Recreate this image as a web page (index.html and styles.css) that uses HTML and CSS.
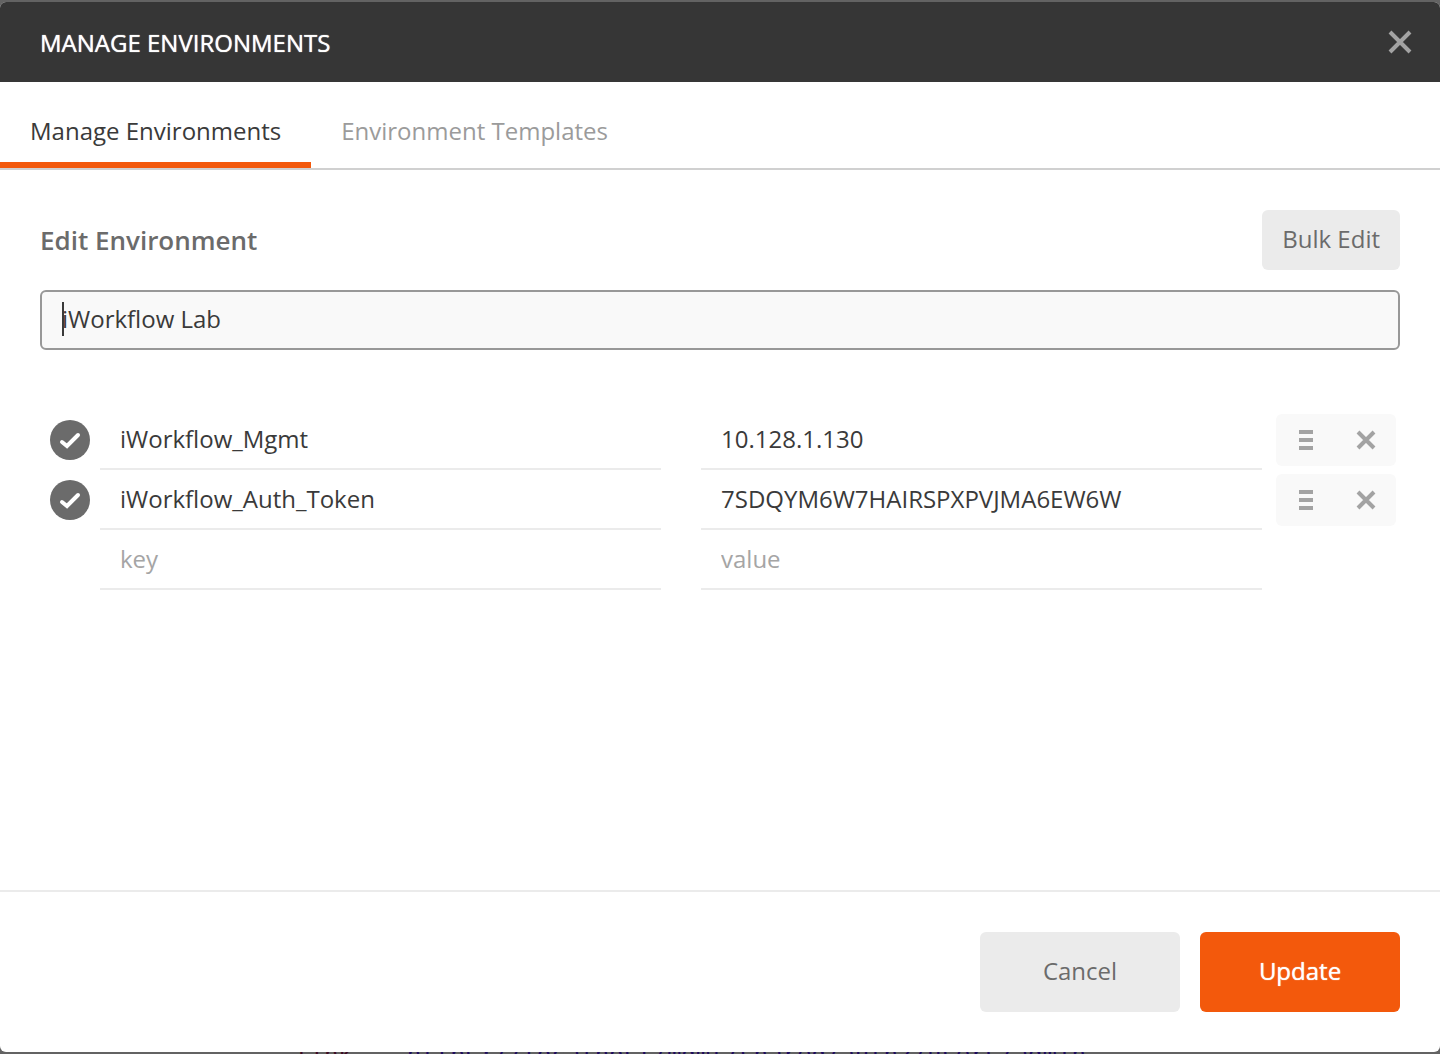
FILE: index.html
```html
<!DOCTYPE html>
<html lang="en">
<head>
<meta charset="utf-8">
<meta name="viewport" content="width=device-width, initial-scale=1">
<title>Manage Environments</title>
<link rel="stylesheet" href="styles.css">
</head>
<body>
<div class="page">
  <section class="modal" role="dialog" aria-labelledby="modal-title">
    <header class="modal-header">
      <h1 class="modal-title" id="modal-title">MANAGE ENVIRONMENTS</h1>
      <button class="icon-button close" type="button" aria-label="Close">
        <svg width="24" height="24" viewBox="0 0 24 24"><path d="M2 2 22 22M22 2 2 22" stroke="currentColor" stroke-width="4" fill="none"/></svg>
      </button>
    </header>
    <nav class="tabs">
      <a class="tab tab-active" href="#manage">Manage Environments</a>
      <a class="tab" href="#templates">Environment Templates</a>
    </nav>
    <form class="editor" id="editor">
      <div class="editor-head">
        <h2 class="editor-title"><label for="env-name">Edit Environment</label></h2>
        <button class="button bulk" type="button">Bulk Edit</button>
      </div>
      <div class="name-field">
        <input class="name-input" id="env-name" type="text" value="iWorkflow Lab">
        <span class="caret"></span>
      </div>
      <div class="rows">
        <div class="row">
          <input class="check" type="checkbox" checked aria-label="Enable iWorkflow_Mgmt">
          <input class="cell" type="text" aria-label="Key 1" placeholder="key" value="iWorkflow_Mgmt">
          <input class="cell" type="text" aria-label="Value 1" placeholder="value" value="10.128.1.130">
          <div class="actions">
            <button class="icon-button" type="button" aria-label="Reorder">
              <svg width="14" height="20" viewBox="0 0 14 20"><path d="M0 2H14M0 10H14M0 18H14" stroke="currentColor" stroke-width="4"/></svg>
            </button>
            <button class="icon-button" type="button" aria-label="Delete">
              <svg width="20" height="20" viewBox="0 0 20 20"><path d="M2 2 18 18M18 2 2 18" stroke="currentColor" stroke-width="4"/></svg>
            </button>
          </div>
        </div>
        <div class="row">
          <input class="check" type="checkbox" checked aria-label="Enable iWorkflow_Auth_Token">
          <input class="cell" type="text" aria-label="Key 2" placeholder="key" value="iWorkflow_Auth_Token">
          <input class="cell" type="text" aria-label="Value 2" placeholder="value" value="7SDQYM6W7HAIRSPXPVJMA6EW6W">
          <div class="actions">
            <button class="icon-button" type="button" aria-label="Reorder">
              <svg width="14" height="20" viewBox="0 0 14 20"><path d="M0 2H14M0 10H14M0 18H14" stroke="currentColor" stroke-width="4"/></svg>
            </button>
            <button class="icon-button" type="button" aria-label="Delete">
              <svg width="20" height="20" viewBox="0 0 20 20"><path d="M2 2 18 18M18 2 2 18" stroke="currentColor" stroke-width="4"/></svg>
            </button>
          </div>
        </div>
        <div class="row">
          <span></span>
          <input class="cell" type="text" aria-label="New key" placeholder="key">
          <input class="cell" type="text" aria-label="New value" placeholder="value">
        </div>
      </div>
    </form>
    <footer class="modal-footer">
      <button class="button wide" type="button">Cancel</button>
      <button class="button wide primary" type="submit" form="editor">Update</button>
    </footer>
  </section>
  <div class="backdrop-code" aria-hidden="true"><span class="code-key">link</span><span class="code-value">https://localhost/mgmt/shared/authz/users/admin</span></div>
</div>
</body>
</html>
```

FILE: styles.css
```css
* {
  box-sizing: border-box;
}

body {
  margin: 0;
  background: #636363;
  color: #3a3a3a;
  font: 24px/32px "Open Sans", "Noto Sans", sans-serif;
}

button,
input {
  margin: 0;
  border: 0;
  font: inherit;
  color: inherit;
}

h1,
h2 {
  margin: 0;
}

.page {
  display: flex;
  flex-direction: column;
  min-height: 100vh;
  padding-top: 2px;
}

.modal {
  flex: 1;
  display: flex;
  flex-direction: column;
  overflow: hidden;
  border-radius: 6px;
  background: #fff;
}

.modal-header {
  display: flex;
  align-items: center;
  justify-content: space-between;
  height: 80px;
  padding: 0 28px 0 40px;
  background: #363636;
  color: #fff;
}

.modal-title {
  padding-top: 2px;
  font-size: 24px;
  font-weight: 400;
  text-shadow: 0 0 1px currentColor;
}

.icon-button {
  display: flex;
  align-items: center;
  justify-content: center;
  padding: 0;
  background: none;
  color: #a3a3a3;
}

.tabs {
  display: flex;
  height: 88px;
  border-bottom: 2px solid #d0d0d0;
}

.tab {
  padding: 33px 30px 15px;
  border-bottom: 6px solid transparent;
  color: #9b9b9b;
  text-decoration: none;
}

.tab-active {
  border-color: #f3590c;
  color: #3a3a3a;
}

.editor {
  flex: 1;
  padding: 40px;
}

.editor-head {
  display: flex;
  align-items: center;
  justify-content: space-between;
  margin-bottom: 20px;
}

.editor-title {
  font-size: 26px;
  font-weight: 600;
  color: #6b6b6b;
}

.button {
  padding: 0 20px 2px;
  border-radius: 6px;
  background: #ebebeb;
  color: #6b6b6b;
}

.bulk {
  height: 60px;
}

.name-field {
  position: relative;
}

.name-input {
  display: block;
  width: 100%;
  height: 60px;
  padding: 0 20px 4px;
  border: 2px solid #989898;
  border-radius: 6px;
  background: #f9f9f9;
}

.caret {
  position: absolute;
  top: 12px;
  left: 22px;
  width: 2px;
  height: 34px;
  background: #3a3a3a;
}

.rows {
  margin-top: 60px;
}

.row {
  display: grid;
  grid-template-columns: 60px 1fr 40px 1fr 14px 120px;
  align-items: center;
  height: 60px;
  padding-right: 4px;
}

.check {
  width: 40px;
  height: 40px;
  margin-left: 10px;
  border-radius: 50%;
  appearance: none;
  background: #6b6b6b;
}

.check:checked {
  background-image: url("data:image/svg+xml,%3Csvg xmlns='http://www.w3.org/2000/svg' viewBox='0 0 40 40'%3E%3Cpath d='M12 22L17 26L28 15' fill='none' stroke='white' stroke-width='4' stroke-linecap='round'/%3E%3C/svg%3E");
}

.cell {
  grid-column: 2;
  width: 100%;
  height: 60px;
  padding: 0 20px 2px;
  border-bottom: 2px solid #ebebeb;
  background: none;
}

.cell + .cell {
  grid-column: 4;
}

.cell::placeholder {
  color: #a5a5a5;
  opacity: 1;
}

.actions {
  grid-column: 6;
  display: grid;
  grid-template-columns: 1fr 1fr;
  height: 52px;
  border-radius: 6px;
  background: #f9f9f9;
}

.modal-footer {
  display: flex;
  justify-content: flex-end;
  gap: 20px;
  padding: 40px;
  border-top: 2px solid #ebebeb;
}

.wide {
  width: 200px;
  height: 80px;
}

.primary {
  background: #f3590c;
  color: #fff;
  text-shadow: 0 0 1px currentColor;
}

.backdrop-code {
  display: flex;
  gap: 54px;
  height: 2px;
  padding-left: 295px;
  overflow: hidden;
  font: 24px/6px "DejaVu Sans Mono", monospace;
  white-space: nowrap;
}

.code-key {
  color: #3d0a22;
}

.code-value {
  color: #1c0a5e;
}
```
